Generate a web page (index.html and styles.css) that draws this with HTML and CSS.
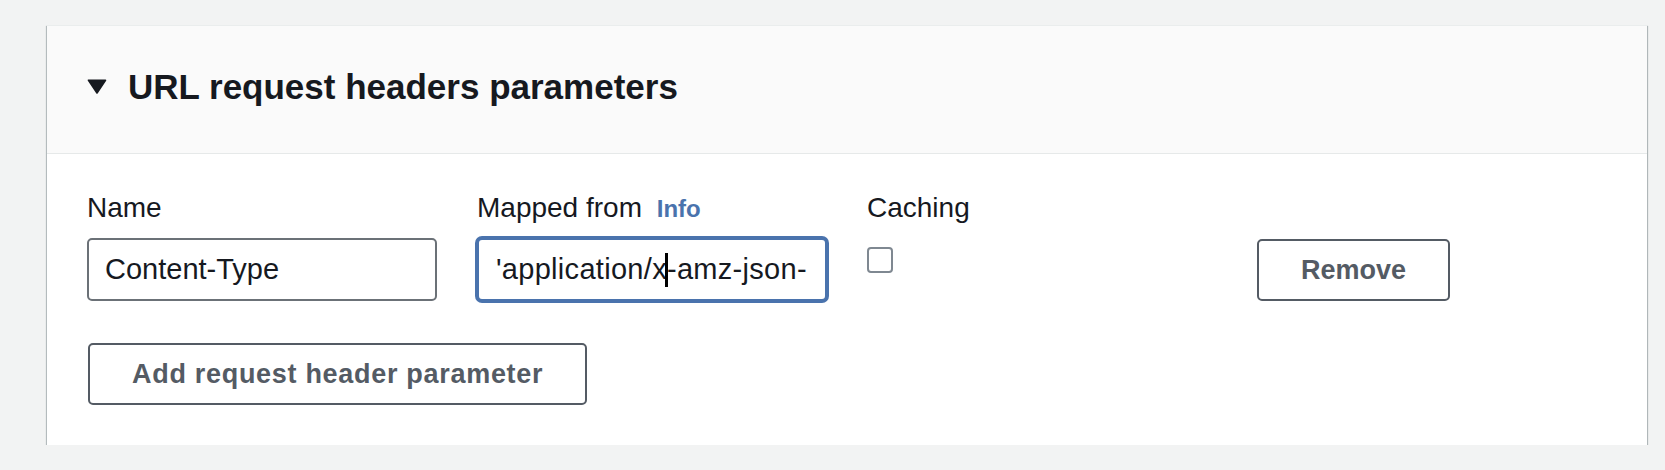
FILE: index.html
```html
<!DOCTYPE html>
<html lang="en">
<head>
<meta charset="utf-8">
<title>URL request headers parameters</title>
<link rel="stylesheet" href="styles.css">
</head>
<body>
<section class="card">
  <header class="card-header">
    <svg class="expand-icon" width="20" height="15" viewBox="0 0 20 15" aria-hidden="true">
      <path d="M1.5 1.2 H18.5 L10 14 Z" fill="#16191f" stroke="#16191f" stroke-width="1.6" stroke-linejoin="round"/>
    </svg>
    <h2 class="card-title">URL request headers parameters</h2>
  </header>
  <div class="card-body">
    <div class="param-row">
      <div class="field">
        <label class="field-label">Name</label>
        <div class="text-input">Content-Type</div>
      </div>
      <div class="field">
        <label class="field-label">Mapped from <a class="info-link">Info</a></label>
        <div class="text-input is-focused">'application/x<span class="text-caret"></span>-amz-json-</div>
      </div>
      <div class="field">
        <label class="field-label">Caching</label>
        <span class="checkbox"></span>
      </div>
      <div class="field field-action">
        <button class="btn">Remove</button>
      </div>
    </div>
    <button class="btn btn-add">Add request header parameter</button>
  </div>
</section>
</body>
</html>
```
FILE: styles.css
```css
html, body {
  margin: 0;
  padding: 0;
  background: #f2f3f3;
}

body {
  font-family: "Liberation Sans", Arial, sans-serif;
  color: #16191f;
}

.card {
  margin: 25px 18px 0 47px;
  background: #ffffff;
  box-shadow: 0 1px 1px 0 rgba(0, 28, 36, 0.4),
              1px 1px 1px 0 rgba(0, 28, 36, 0.22),
              -1px 1px 1px 0 rgba(0, 28, 36, 0.2);
  border-top: 1px solid #eaeded;
}

.card-header {
  display: flex;
  align-items: center;
  gap: 21px;
  padding: 39px 40px 45px;
  background: #fafafa;
  border-bottom: 1px solid #e6e9e9;
}

.expand-icon {
  display: block;
  flex: none;
}

.card-title {
  margin: 0;
  font-size: 35px;
  line-height: 43px;
  font-weight: 700;
  color: #16191f;
}

.card-body {
  padding: 36px 40px 40px;
}

.param-row {
  display: grid;
  grid-template-columns: repeat(4, 350px);
  column-gap: 40px;
  align-items: start;
}

.field {
  display: flex;
  flex-direction: column;
  align-items: flex-start;
}

.field-action {
  align-self: end;
}

.field-label {
  font-size: 28px;
  line-height: 36px;
  height: 36px;
  margin-bottom: 12px;
  color: #16191f;
}

.info-link {
  font-size: 24px;
  line-height: 1;
  font-weight: 700;
  color: #4a73ad;
  margin-left: 7px;
}

.text-input {
  box-sizing: border-box;
  width: 100%;
  height: 63px;
  display: flex;
  align-items: center;
  padding: 0 16px;
  border: 2px solid #6b7177;
  border-radius: 5px;
  font-size: 29px;
  color: #16191f;
  white-space: nowrap;
  overflow: hidden;
  background: #ffffff;
}

.text-input.is-focused {
  border-color: #4a73ad;
  box-shadow: 0 0 0 2px #4a73ad;
  padding-left: 17px;
  letter-spacing: 0.3px;
}

.text-caret {
  display: inline-block;
  flex: none;
  width: 3px;
  height: 34px;
  margin: 0 -1.5px;
  background: #000000;
}

.checkbox {
  box-sizing: border-box;
  width: 26px;
  height: 26px;
  margin-top: 9px;
  border: 2px solid #7f8891;
  border-radius: 4px;
  background: #ffffff;
}

.btn {
  box-sizing: border-box;
  height: 62px;
  padding: 0 42px;
  border: 2px solid #545b64;
  border-radius: 5px;
  background: #ffffff;
  font-family: "Liberation Sans", Arial, sans-serif;
  font-size: 27px;
  font-weight: 700;
  color: #545b64;
  cursor: pointer;
}

.btn-add {
  display: block;
  margin-top: 42px;
  margin-left: 1px;
  letter-spacing: 0.7px;
}
```
